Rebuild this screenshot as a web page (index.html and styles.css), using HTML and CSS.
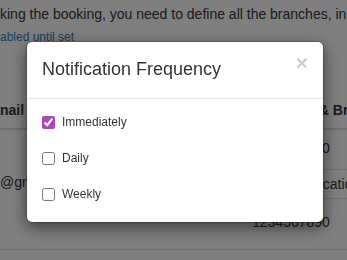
FILE: index.html
```html
<!DOCTYPE html>
<html lang="en">
<head>
<meta charset="utf-8">
<title>Notification Frequency</title>
<link rel="stylesheet" href="styles.css">
</head>
<body>
<div class="page">
  <p class="intro">king the booking, you need to define all the branches, in which the service is available</p>
  <p class="note">abled until set</p>
  <div class="table">
    <div class="th th-first">nail</div>
    <div class="th th-contacts">Contacts &amp; Branches</div>
    <div class="td td-email">@gmail.com</div>
    <div class="td td-contacts">
      <div class="sub sub-phone">1234567890</div>
      <div class="sub sub-notify">Email Notification</div>
      <div class="sub sub-last">1234567890</div>
    </div>
  </div>
</div>
<div class="backdrop"></div>
<div class="modal">
  <div class="modal-header">
    <h4 class="modal-title">Notification Frequency</h4>
    <button class="close" type="button">&times;</button>
  </div>
  <div class="modal-body">
    <label class="option"><input type="checkbox" checked>Immediately</label>
    <label class="option"><input type="checkbox">Daily</label>
    <label class="option"><input type="checkbox">Weekly</label>
  </div>
</div>
</body>
</html>
```
FILE: styles.css
```css
html, body {
  margin: 0;
  padding: 0;
  background: #fff;
}
body {
  font-family: "Liberation Sans", Arial, sans-serif;
  font-size: 14px;
  color: #333;
  overflow: hidden;
  width: 347px;
  height: 260px;
}
.page {
  width: 347px;
  overflow: hidden;
}
.intro {
  margin: 0;
  padding-top: 4px;
  line-height: 20px;
  white-space: nowrap;
}
.note {
  margin: 5px 0 0;
  font-size: 12px;
  line-height: 17px;
  color: #337ab7;
  white-space: nowrap;
}
.table {
  margin-top: 46px;
  display: grid;
  grid-template-columns: 244px 1fr;
  white-space: nowrap;
  line-height: 20px;
}
.th {
  padding: 8px;
  font-weight: bold;
  border-bottom: 2px solid #ddd;
}
.th-first {
  padding-left: 0;
}
.th-contacts {
  padding-left: 11px;
}
.td {
  border-bottom: 1px solid #ddd;
}
.td-email {
  padding-top: 42px;
}
.td-contacts {
  display: flex;
  flex-direction: column;
  padding-left: 8px;
}
.sub-phone {
  padding: 8px 0 11px;
  border-bottom: 1px solid #ddd;
}
.sub-notify {
  padding: 4px 0;
  border-bottom: 1px solid #ddd;
}
.sub-last {
  padding: 13px 0 17px;
}
.backdrop {
  position: fixed;
  inset: 0;
  background: rgba(0, 0, 0, 0.5);
}
.modal {
  position: fixed;
  top: 41px;
  left: 26px;
  width: 296px;
  background: #fff;
  border: 1px solid rgba(0, 0, 0, 0.2);
  border-radius: 6px;
  box-shadow: 0 5px 15px rgba(0, 0, 0, 0.5);
  background-clip: padding-box;
}
.modal-header {
  display: flex;
  justify-content: space-between;
  align-items: flex-start;
  padding: 15px;
  border-bottom: 1px solid #e5e5e5;
}
.modal-title {
  margin: 0;
  font-size: 18px;
  font-weight: normal;
  line-height: 1.42857;
  color: #333;
}
.close {
  margin-top: -5px;
  padding: 0;
  border: 0;
  background: none;
  font-family: "Liberation Sans", Arial, sans-serif;
  font-size: 21px;
  font-weight: bold;
  line-height: 1;
  color: #000;
  opacity: 0.2;
}
.modal-body {
  display: flex;
  flex-direction: column;
  gap: 16px;
  padding: 13px 15px 18px;
}
.option {
  display: flex;
  align-items: flex-start;
  font-size: 12px;
  line-height: 20px;
  color: #333;
}
.option input {
  width: 13px;
  height: 13px;
  margin: 4px 7px 0 0;
  accent-color: #ab47bc;
}
```
